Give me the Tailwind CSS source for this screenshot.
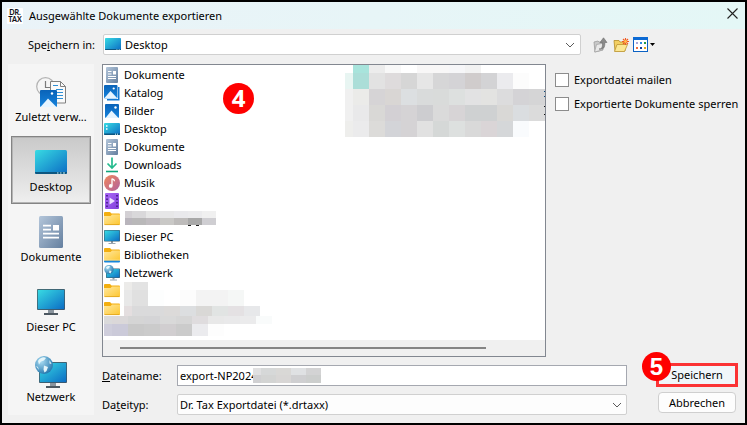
<!DOCTYPE html>
<html lang="de">
<head>
<meta charset="utf-8">
<title>Ausgewählte Dokumente exportieren</title>
<script src="https://cdn.jsdelivr.net/npm/@tailwindcss/browser@4"></script>
</head>
<body class="font-['Noto_Sans','Open_Sans',sans-serif] text-[11px] leading-[16px] text-black bg-[#f0f0f0]">

<svg width="0" height="0" class="absolute" aria-hidden="true">
  <defs>
    <linearGradient id="teal" x1="0" y1="0" x2="1" y2="1"><stop offset="0" stop-color="#38dbe3"/><stop offset="1" stop-color="#0b6cc4"/></linearGradient>
    <linearGradient id="slate" x1="0" y1="0" x2="1" y2="1"><stop offset="0" stop-color="#b4c6da"/><stop offset="1" stop-color="#647f9f"/></linearGradient>
    <linearGradient id="blue" x1="0" y1="0" x2="0" y2="1"><stop offset="0" stop-color="#0a63b8"/><stop offset="1" stop-color="#1583dd"/></linearGradient>
    <linearGradient id="yellow" x1="0" y1="0" x2="1" y2="1"><stop offset="0" stop-color="#ffe8a0"/><stop offset="1" stop-color="#fdc62f"/></linearGradient>
    <linearGradient id="music" x1="0" y1="0" x2="1" y2="1"><stop offset="0" stop-color="#f2875a"/><stop offset="1" stop-color="#b0619f"/></linearGradient>
    <linearGradient id="violet" x1="0" y1="0" x2="1" y2="1"><stop offset="0" stop-color="#a968f5"/><stop offset="1" stop-color="#8240dc"/></linearGradient>
    <radialGradient id="globe" cx=".35" cy=".3" r=".8"><stop offset="0" stop-color="#a9dcf2"/><stop offset="1" stop-color="#1b6fa8"/></radialGradient>
  </defs>
  <symbol id="i-doc" viewBox="0 0 16 16"><rect x="2" y="0" width="12" height="16" rx="1" fill="url(#slate)"/><path d="M4 4.500h3.500M4 7h3.500M4 9.500h8M4 11.500h8" stroke="#fff"/><rect x="9" y="4" width="3" height="3.500" fill="#fff"/></symbol>
  <symbol id="i-catalog" viewBox="0 0 16 16"><path d="M14 2h1.500v13.500H3V14h11z" fill="#1479d2"/><rect x="0" y="0" width="13.500" height="13.500" rx="1" fill="url(#blue)"/><path d="M0 13.500 6.500 6l7 7.500z" fill="#e6f4ff"/><circle cx="9.700" cy="3.500" r="1.100" fill="#fff"/></symbol>
  <symbol id="i-pic" viewBox="0 0 16 16"><rect x="1" y="1" width="14" height="14" rx="1" fill="url(#blue)"/><path d="M1.500 15 7.500 7.500 14.500 15z" fill="#e6f4ff"/><circle cx="11.500" cy="4.500" r="1.200" fill="#fff"/></symbol>
  <symbol id="i-desk" viewBox="0 0 16 16"><rect x="0" y="2" width="16" height="12" rx="1" fill="url(#teal)"/><path d="M2 5h1.500M2 8h1.500" stroke="#fff" stroke-width="1.500"/><path d="M0 12.500h16V13a1 1 0 0 1-1 1H1a1 1 0 0 1-1-1z" fill="#0c5580"/><path d="M11 13.200h1M13 13.200h1" stroke="#dff"/></symbol>
  <symbol id="i-down" viewBox="0 0 16 16"><path d="M8 .5v10M3.500 6.500 8 11l4.500-4.500" fill="none" stroke="#25bb8e" stroke-width="1.700"/><path d="M2 13.700h12v1.600H2z" fill="#12a67c"/></symbol>
  <symbol id="i-music" viewBox="0 0 16 16"><circle cx="8" cy="8" r="8" fill="url(#music)"/><path d="M8 3.500v7.200M8 3.800c1 .4 2.500.6 2.500 2.400" fill="none" stroke="#fff" stroke-width="1.300"/><circle cx="6.700" cy="10.900" r="1.900" fill="#fff"/></symbol>
  <symbol id="i-video" viewBox="0 0 16 16"><rect x="1" y="0" width="14" height="16" rx="1" fill="url(#violet)"/><path d="M3 2v12.500M13 2v12.500" stroke="#3a1778" stroke-width="1.500" stroke-dasharray="1.500 2"/><path d="M5.500 4.500v7l5.500-3.500z" fill="#ece2ff"/></symbol>
  <symbol id="i-folder" viewBox="0 0 16 16"><path d="M0 2a1 1 0 0 1 1-1h5l1.500 1.500H15a1 1 0 0 1 1 1V8H0z" fill="#f3ae0e"/><path d="M0 5h6.500L8 3.500h8V13a1 1 0 0 1-1 1H1a1 1 0 0 1-1-1z" fill="url(#yellow)"/><path d="M.5 13.600h15" stroke="#dd9f16" stroke-width=".8"/></symbol>
  <symbol id="i-lib" viewBox="0 0 16 16"><use href="#i-folder" width="16" height="16"/><path d="M0 13.500h16v1a1 1 0 0 1-1 1H1a1 1 0 0 1-1-1z" fill="#1586dc"/><path d="M0 13.200h16" stroke="#fff2c0" stroke-width=".6"/></symbol>
  <symbol id="i-pc" viewBox="0 0 16 16"><path d="M7 12h2v2H7z" fill="#8d98a3"/><path d="M4.500 14.500h7" stroke="#9aa5af"/><rect x="0" y="1" width="16" height="11.500" rx=".7" fill="#3d6273"/><rect x=".6" y="1.600" width="14.800" height="10.300" fill="url(#teal)"/></symbol>
  <symbol id="i-net" viewBox="0 0 16 16"><path d="M8.500 12.500h2v2h-2z" fill="#8d98a3"/><path d="M6 15h7" stroke="#9aa5af"/><rect x="2" y="3.500" width="14" height="9.500" rx=".7" fill="#3d6273"/><rect x="2.600" y="4" width="12.800" height="8.400" fill="url(#teal)"/><circle cx="5" cy="4.500" r="4.700" fill="url(#globe)"/><path d="M2 2.500c1-1.500 3-2 4-1.200L5 3.200 3 4zM5.500 5.500l2 .5-1 2.500-1.500-1z" fill="#e9f7fb"/></symbol>
  <symbol id="b-recent" viewBox="0 0 32 32"><circle cx="10.500" cy="10.500" r="8.800" fill="#f6f6f6" stroke="#b3b3b3" stroke-width="1.200"/><path d="M10.500 5v6.500H16" fill="none" stroke="#7b7b7b" stroke-width="1.200"/><path d="M15.500 5.500h10l5 5V27h-15z" fill="#fafafa" stroke="#808080"/><path d="M25.500 5.500v5h5" fill="none" stroke="#808080"/><path d="M18 9.500h5M21 13.500h7M21 16.500h7M22 19.500h6M22 22.500h6" stroke="#2d8fd6"/><rect x="5" y="14" width="17" height="17" rx="1" fill="url(#blue)"/><path d="M5.500 31 13 22.500 21.500 31z" fill="#e6f4ff"/><circle cx="17" cy="17.500" r="1.200" fill="#fff"/></symbol>
  <symbol id="b-desk" viewBox="0 0 32 32"><rect x="0" y="4" width="32" height="24" rx="1.500" fill="url(#teal)"/><path d="M0 26h32v.5a1.500 1.500 0 0 1-1.500 1.500h-29A1.500 1.500 0 0 1 0 26.500z" fill="#0d5680"/><path d="M22 27h1.500M25 27h1.500M28 27h2" stroke="#c8f1f5"/></symbol>
  <symbol id="b-doc" viewBox="0 0 32 32"><rect x="4" y="0" width="24" height="32" rx="1.500" fill="url(#slate)"/><path d="M8 9.700h8M8 13.700h8M8 17.700h16M8 21.700h16" stroke="#fff" stroke-width="1.700"/><rect x="18" y="9" width="6" height="5.500" fill="#fff"/></symbol>
  <symbol id="b-pc" viewBox="0 0 32 32"><path d="M13 24h6v4h-6z" fill="#8b959e"/><path d="M9 27h14v2H9z" fill="#4d5861"/><rect x="2" y="3" width="28" height="21" rx="1" fill="#44525c"/><rect x="2.700" y="3.800" width="26.600" height="19.400" fill="url(#teal)"/></symbol>
  <symbol id="b-net" viewBox="0 0 32 32"><path d="M15 27h6v3h-6z" fill="#8b959e"/><path d="M11 30h14v2H11z" fill="#4d5861"/><rect x="4" y="6" width="28" height="21" rx="1" fill="#44525c"/><rect x="4.700" y="6.800" width="26.600" height="19.400" fill="url(#teal)"/><circle cx="9" cy="9" r="9" fill="url(#globe)"/><path d="M3 5C5 1.500 9 .5 11 2l-2 2.500-3 1-2 3zM9 9.500l4 1.500-1.500 4-2 1.500-1-3zM14.500 4l2 4-2-.5zM1 10l2 1 1 3z" fill="#e4f5fa"/></symbol>
  <symbol id="chev" viewBox="0 0 10 10"><path d="M1 3l4 4 4-4" fill="none" stroke="#5a5a5a"/></symbol>
</svg>

<main class="min-h-screen flex flex-col border-2 border-black">
  <header class="h-[27px] flex items-center pl-[5px] pr-[7px] bg-linear-to-r from-[#eaf3f8] to-[#e4f7f6]">
    <div class="w-[16px] h-[16px] rounded-[1px] bg-white flex flex-col items-center justify-center font-['Lato',sans-serif] font-black text-[7px] leading-[7px] text-[#15151c]"><span>DR.</span><span>TAX</span></div>
    <h1 class="flex-1 ml-[6px]">Ausgewählte Dokumente exportieren</h1>
    <button aria-label="Schliessen" class="w-[11px] h-[11px] -mt-[4px]"><svg viewBox="0 0 11 11" class="w-full h-full"><path d="M.5.5l10 10M10.500.5l-10 10" stroke="#222" stroke-width="1.100"/></svg></button>
  </header>

  <div class="flex items-center pt-[5px] pr-[90px]">
    <label for="folder" class="w-[101px] pr-[8px] text-right">Spe<u>i</u>chern in:</label>
    <div class="relative flex-1 h-[21px]">
      <select id="folder" class="appearance-none w-full h-full pl-[21px] bg-white border border-[#d0d0d0] rounded-[2px]"><option>Desktop</option></select>
      <svg class="absolute left-[2px] top-[2px] w-[16px] h-[16px] pointer-events-none"><use href="#b-desk"/></svg>
      <svg class="absolute right-[6px] top-[6px] w-[10px] h-[10px] pointer-events-none"><use href="#chev"/></svg>
    </div>
    <div class="flex gap-[4px] ml-[12px]">
      <button aria-label="Übergeordneter Ordner" class="w-[16px] h-[16px]"><svg viewBox="0 0 16 16"><path d="M1 5l4-1 1 1h3l1 8-8 2z" fill="#c9c9c9" stroke="#9c9c9c" stroke-width=".8"/><path d="M3.500 7.500l7.500-1.500-1.500 7L1.500 15z" fill="#e9e9e9" stroke="#a5a5a5" stroke-width=".8"/><path d="M6 12c3.500 0 3.500-2.500 3.500-6.500H7L10.500.8 14 5.500h-2.200c.3 5-1.500 7.500-5.800 6.500z" fill="#8a8a8a" stroke="#6d6d6d" stroke-width=".6"/></svg></button>
      <button aria-label="Neuer Ordner" class="w-[16px] h-[16px]"><svg viewBox="0 0 16 16"><path d="M1 3.500h5l1 1.500h5v9H2z" fill="#f3cf62" stroke="#b48c25" stroke-width=".8"/><path d="M4 7.500h10.500l-3 7H1.500z" fill="#fbe793" stroke="#bd9632" stroke-width=".8"/><path d="M12.500 1v7M9 4.500h7M10 2l5 5M15 2l-5 5" stroke="#f25a22" stroke-width="1.100"/><circle cx="12.500" cy="4.500" r="1.400" fill="#ffc04d"/></svg></button>
      <button aria-label="Ansicht" class="flex items-center gap-[2px] h-[16px]"><svg class="w-[15px] h-[15px]" viewBox="0 0 15 15"><rect x=".5" y=".5" width="14" height="14" fill="#fff" stroke="#0c62c4"/><path d="M0 0h15v3H0z" fill="#0c6ad4"/><path d="M3 5h2v2H3z" fill="#a9a4d8"/><path d="M7 5h2v2H7z" fill="#2a8ae0"/><path d="M11 5h2v2h-2z" fill="#249a42"/><path d="M3 10h2v2H3z" fill="#f06d3c"/><path d="M7 10h2v2H7z" fill="#123b96"/><path d="M11 10h2v2h-2z" fill="#e3a519"/></svg><svg class="w-[5px] h-[3px]" viewBox="0 0 5 3"><path d="M0 0h5L2.500 3z"/></svg></button>
    </div>
  </div>

  <div class="flex-1 flex gap-[8px] pt-[9px] pb-[8px] pl-[6px] pr-[7px]">
    <nav class="w-[86px] flex flex-col gap-[2px] items-center pt-[2px] bg-[#f5f5f5]">
      <button class="w-[80px] h-[68px] flex flex-col items-center pt-[9px] gap-[1px] border border-transparent"><svg class="w-[32px] h-[32px]"><use href="#b-recent"/></svg>Zuletzt verw...</button>
      <button aria-current="true" class="w-[80px] h-[68px] flex flex-col items-center pt-[9px] gap-[1px] border border-[#848484] shadow-[inset_0_0_0_1px_#b4b4b4] bg-linear-to-b from-[#c9c9c9] to-[#efefef]"><svg class="w-[32px] h-[32px]"><use href="#b-desk"/></svg>Desktop</button>
      <button class="w-[80px] h-[68px] flex flex-col items-center pt-[9px] gap-[1px] border border-transparent"><svg class="w-[32px] h-[32px]"><use href="#b-doc"/></svg>Dokumente</button>
      <button class="w-[80px] h-[68px] flex flex-col items-center pt-[9px] gap-[1px] border border-transparent"><svg class="w-[32px] h-[32px]"><use href="#b-pc"/></svg>Dieser PC</button>
      <button class="w-[80px] h-[68px] flex flex-col items-center pt-[9px] gap-[1px] border border-transparent"><svg class="w-[32px] h-[32px]"><use href="#b-net"/></svg>Netzwerk</button>
    </nav>

    <div class="flex-1 flex flex-col gap-[8px]">
      <div class="flex-1 flex gap-[9px]">
        <section class="relative flex-1 flex flex-col border border-[#828790] bg-white">
          <ul class="flex-1 pt-[1px] pl-[1px]">
            <li class="flex items-center gap-[4px] h-[18px]"><svg class="w-[16px] h-[16px]"><use href="#i-doc"/></svg>Dokumente</li>
            <li class="flex items-center gap-[4px] h-[18px]"><svg class="w-[16px] h-[16px]"><use href="#i-catalog"/></svg>Katalog</li>
            <li class="flex items-center gap-[4px] h-[18px]"><svg class="w-[16px] h-[16px]"><use href="#i-pic"/></svg>Bilder</li>
            <li class="flex items-center gap-[4px] h-[18px]"><svg class="w-[16px] h-[16px]"><use href="#i-desk"/></svg>Desktop</li>
            <li class="flex items-center gap-[4px] h-[18px]"><svg class="w-[16px] h-[16px]"><use href="#i-doc"/></svg>Dokumente</li>
            <li class="flex items-center gap-[4px] h-[18px]"><svg class="w-[16px] h-[16px]"><use href="#i-down"/></svg>Downloads</li>
            <li class="flex items-center gap-[4px] h-[18px]"><svg class="w-[16px] h-[16px]"><use href="#i-music"/></svg>Musik</li>
            <li class="flex items-center gap-[4px] h-[18px]"><svg class="w-[16px] h-[16px]"><use href="#i-video"/></svg>Videos</li>
            <li class="flex items-center gap-[4px] h-[18px]"><svg class="w-[16px] h-[16px]"><use href="#i-folder"/></svg></li>
            <li class="flex items-center gap-[4px] h-[18px]"><svg class="w-[16px] h-[16px]"><use href="#i-pc"/></svg>Dieser PC</li>
            <li class="flex items-center gap-[4px] h-[18px]"><svg class="w-[16px] h-[16px]"><use href="#i-lib"/></svg>Bibliotheken</li>
            <li class="flex items-center gap-[4px] h-[18px]"><svg class="w-[16px] h-[16px]"><use href="#i-net"/></svg>Netzwerk</li>
            <li class="flex items-center gap-[4px] h-[18px]"><svg class="w-[16px] h-[16px]"><use href="#i-folder"/></svg></li>
            <li class="flex items-center gap-[4px] h-[18px]"><svg class="w-[16px] h-[16px]"><use href="#i-folder"/></svg></li>
          </ul>
          <div class="h-[16px] flex items-center bg-[#f0f0f0] pl-[17px] pr-[59px]"><div class="flex-1 h-[2px] bg-[#858585]"></div></div>
          <!-- Pixelated areas hiding private names -->
          <svg id="mosaic-right" class="absolute right-0 top-0 w-[200px] h-[73px]" viewBox="345 65 200 73" shape-rendering="crispEdges" aria-hidden="true"></svg>
          <svg id="mosaic-left" class="absolute left-0 top-[143px] w-[170px] h-[130px]" viewBox="103 208 170 130" shape-rendering="crispEdges" aria-hidden="true"></svg>
          <div class="absolute left-[120px] top-[18px] w-[31px] h-[31px] rounded-full bg-[#fe0000] flex items-center justify-center text-white font-bold text-[24px] leading-[29px] pb-[2px]">4</div>
        </section>
        <div class="w-[183px] flex flex-col gap-[8px] pt-[8px]">
          <label class="flex items-center gap-[5px] h-[16px]"><input type="checkbox" class="appearance-none w-[14px] h-[14px] bg-white border border-[#8c8c8c]">Exportdatei mailen</label>
          <label class="flex items-center gap-[5px] h-[16px] whitespace-nowrap"><input type="checkbox" class="appearance-none shrink-0 w-[14px] h-[14px] bg-white border border-[#8c8c8c]">Exportierte Dokumente sperren</label>
        </div>
      </div>

      <div class="flex gap-[29px]">
        <div class="flex-1 flex flex-col gap-[8px]">
          <div class="flex items-center">
            <label for="name" class="w-[75px]"><u>D</u>ateiname:</label>
            <div class="relative flex-1 h-[21px]">
              <input id="name" type="text" value="export-NP2024" class="block w-full h-full pl-[2px] bg-white border border-[#a5a8b0]">
              <svg id="mosaic-name" class="absolute left-[76px] top-[3px] w-[68px] h-[15px]" viewBox="253 368 68 15" shape-rendering="crispEdges" aria-hidden="true"></svg>
            </div>
          </div>
          <div class="flex items-center">
            <label for="type" class="w-[75px]">Da<u>t</u>eityp:</label>
            <div class="relative flex-1 h-[21px]">
              <select id="type" class="appearance-none block w-full h-full pl-[2px] bg-[#fdfdfd] border border-[#d0d0d0] rounded-[2px]"><option>Dr. Tax Exportdatei (*.drtaxx)</option></select>
              <svg class="absolute right-[5px] top-[6px] w-[10px] h-[10px] pointer-events-none"><use href="#chev"/></svg>
            </div>
          </div>
        </div>
        <div class="relative w-[82px] flex flex-col gap-[5px] -mt-[2px]">
          <button class="h-[24px] bg-[#f0f6fa] border-3 border-[#fb3335]">Speichern</button>
          <button class="h-[21px] mx-[2px] bg-[#fdfdfd] border border-[#cfcfcf] rounded-[4px] flex items-center justify-center">Abbrechen</button>
          <div class="absolute -left-[14px] -top-[11px] w-[29px] h-[29px] rounded-full bg-[#fe0000] flex items-center justify-center text-white font-['Liberation_Sans',sans-serif] font-bold text-[24px] leading-[27px] pb-[1px]">5</div>
        </div>
      </div>
    </div>
  </div>
</main>

<script>
// Each row: [y, height, [[x, width, colour], ...]]
function mosaic(id, rows) {
  var svg = document.getElementById(id);
  rows.forEach(function (row) {
    row[2].forEach(function (c) {
      var r = document.createElementNS('http://www.w3.org/2000/svg', 'rect');
      r.setAttribute('x', c[0]); r.setAttribute('y', row[0]);
      r.setAttribute('width', c[1]); r.setAttribute('height', row[1]);
      r.setAttribute('fill', '#' + c[2]);
      svg.appendChild(r);
    });
  });
}
// One narrow first cell, then equal cells
function cells(x, first, w, colours) {
  return colours.split(' ').map(function (c, i) {
    return [i ? x + first + (i - 1) * w : x, i ? w : first, c];
  });
}
mosaic('mosaic-right', [
  [65, 8, cells(345, 8, 16, 'ffffff a8e4dc ececec f8f8f8 ffffff f8f7f7 f8f7f7 f6f6f8 f2f2f2')],
  [73, 16, cells(345, 8, 16, 'e8f5f2 abded8 e2e2e2 dedbdc d6d6d6 e6e6e6 d6d6d7 d4d3d6 d0cccc d3d3d5 ebebee fcfcfc')],
  [89, 16, cells(345, 8, 16, 'f0f0f0 ebebe9 d6d4d6 d9d6d4 dcdfe1 d9dbdb d9dbda dde0df e2e2e3 e3e3e1 dcdcdd d4d3d6 d5d5d6')],
  [105, 16, cells(345, 8, 16, 'f0f0f0 e9e9ea d9d8d6 d3d0d4 d5d3d5 cdcdd0 dadada d7d4d6 cfd1d2 cfd1d2 d9d8d6 dadde0 dbdbdb')],
  [121, 16, cells(345, 8, 16, 'eeeeec ebebec dcdbd9 d3d4d8 d5d3d5 e1e1e1 d5d8d7 dde0df d9d9d9 dad5d7 d5d7d9 f9fbfd')],
  [91, 1, [[544, 1, '0b4a7c']]], [96, 1, [[544, 1, '0b4a7c']]],
  [106, 1, [[544, 1, '111111']]], [114, 1, [[544, 1, '111111']]]
]);
mosaic('mosaic-left', [
  [211, 7, cells(125, 7, 14, 'd3d0d4 d9d8da e6e6e6 e7e7e8 e9e9ec ebebed f0f0f0')],
  [218, 7, cells(125, 7, 14, 'b9b5bc b9b8b9 c0bcc0 c9c8c6 bdbbba a8a8a8 cfced2')],
  [225, 1, [[188, 3, '222222'], [196, 3, '222222']]],
  [282, 8, cells(124, 8, 16, 'ecebe9 e3e3e3')],
  [290, 16, cells(124, 8, 16, 'e8e8e8 e0e0e0 fdfefe ffffff fcfcfc f3f3f3 f3f3f3 f5f7f6')],
  [306, 10, cells(124, 8, 16, 'e4dedf dadadb dadadb dcdad9 dcdee0 d9d8d6 e1e4e3 e4e1e3 e7e8ea')],
  [316, 8, cells(104, 8, 16, 'dadadb dbd8d9 d5d5d5 d4d4d6 d9d9d9 d6d6d6 dfdcde e8e8e8 e9e9ea ebebec f9fbfb')],
  [324, 12, cells(104, 8, 16, 'cfcedc cbcad9 c9c9c9 cbcbcb d1ced0 cbcbcb ebebee fdfdfd')]
]);
mosaic('mosaic-name', [
  [368, 7, cells(253, 8, 15, 'e0e0e1 d6d8d8 d9d8d6 dfe1e3 d3d3d4')],
  [375, 8, cells(253, 8, 15, 'd0d0d2 d3d4d3 d8d6d5 cfcfd1 cccecd')]
]);
</script>
</body>
</html>
